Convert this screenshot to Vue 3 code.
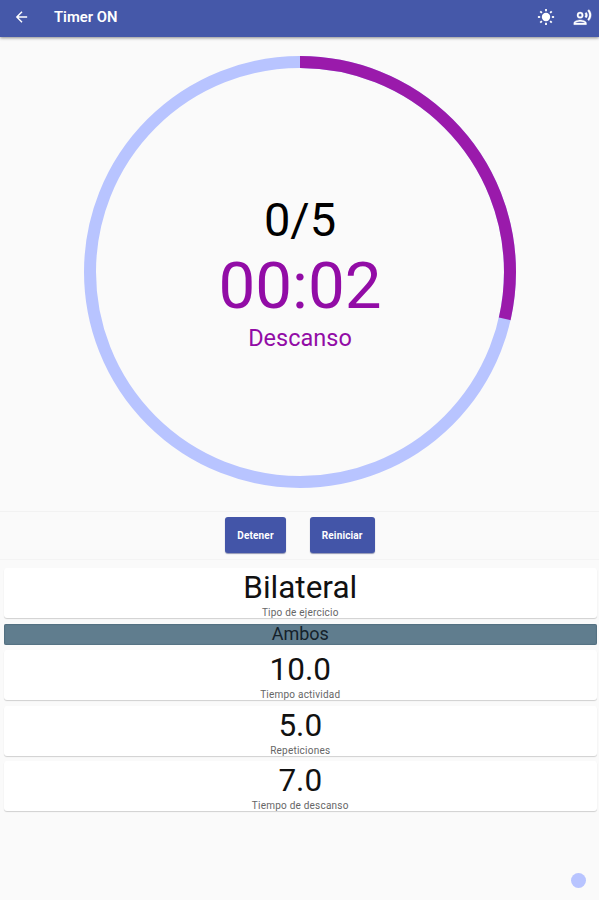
<template>
  <div class="screen">
    <header class="app-bar">
      <svg class="icon back" viewBox="0 0 24 24">
        <path d="M20 11H7.83l5.59-5.59L12 4l-8 8 8 8 1.41-1.41L7.83 13H20v-2z" />
      </svg>
      <h1 class="title">Timer ON</h1>
      <svg class="icon sun" viewBox="0 0 24 24">
        <circle cx="12" cy="12" r="5.6" />
        <g class="rays">
          <path
            v-for="n in 8"
            :key="n"
            d="M12 1.2v3"
            :transform="`rotate(${n * 45} 12 12)`"
          />
        </g>
      </svg>
      <svg class="icon voice" viewBox="0 0 24 24">
        <path
          fill-rule="evenodd"
          d="M9 5a4 4 0 1 0 0 8 4 4 0 0 0 0-8zm0 2a2 2 0 1 1 0 4 2 2 0 0 1 0-4zM9 15c-2.67 0-8 1.34-8 4v2h16v-2c0-2.66-5.33-4-8-4zm-6 4c.2-.7 3.3-2 6-2s5.8 1.3 6 2H3z"
        />
        <path
          d="M16.76 5.36l-1.68 1.69c.84 1.18.84 2.71 0 3.89l1.68 1.69c2.02-2.02 2.02-5.07 0-7.27zM20.07 2l-1.63 1.63c2.77 3.02 2.77 7.56 0 10.74L20.07 16c3.9-3.89 3.91-9.95 0-14z"
        />
      </svg>
    </header>

    <section class="timer">
      <div class="dial">
        <svg class="ring" viewBox="0 0 432 432">
          <circle class="track" cx="216" cy="216" :r="radius" />
          <circle
            class="progress"
            cx="216"
            cy="216"
            :r="radius"
            :stroke-dasharray="dash"
            transform="rotate(-90 216 216)"
          />
        </svg>
        <div class="readout">
          <div class="count">0/5</div>
          <div class="clock">00:02</div>
          <div class="phase">Descanso</div>
        </div>
      </div>
    </section>

    <div class="actions">
      <button type="button" class="btn">Detener</button>
      <button type="button" class="btn">Reiniciar</button>
    </div>

    <main class="cards">
      <div class="card">
        <div class="value">Bilateral</div>
        <div class="label">Tipo de ejercicio</div>
      </div>
      <div class="side">Ambos</div>
      <div v-for="item in settings" :key="item.label" class="card">
        <div class="value">{{ item.value }}</div>
        <div class="label">{{ item.label }}</div>
      </div>
    </main>

    <span class="dot"></span>
  </div>
</template>

<script setup>
const radius = 210;
const length = 2 * Math.PI * radius;
// 2 of the 7 seconds of rest have passed
const dash = `${(length * 2) / 7} ${length}`;

const settings = [
  { value: "10.0", label: "Tiempo actividad" },
  { value: "5.0", label: "Repeticiones" },
  { value: "7.0", label: "Tiempo de descanso" },
];
</script>

<style>
body {
  margin: 0;
}
</style>

<style scoped>
.screen {
  position: relative;
  box-sizing: border-box;
  height: 900px;
  overflow: hidden;
  background: #fafafa;
  color: #111;
  font-family: Roboto, sans-serif;
}
.app-bar {
  position: relative;
  display: flex;
  align-items: center;
  box-sizing: border-box;
  height: 37px;
  padding: 0 7px 3px 13px;
  background: #4558a9;
  box-shadow: 0 1px 3px rgba(0, 0, 0, 0.45);
}
.icon {
  flex: none;
  width: 18px;
  height: 18px;
  fill: #fff;
}
.title {
  flex: 1;
  margin: 0 0 0 24px;
  color: #fff;
  font-size: 14.8px;
  font-weight: 600;
  line-height: 18px;
}
.back {
  width: 17px;
}
.sun {
  margin-right: 18px;
}
.voice {
  width: 19px;
  height: 19px;
  stroke: #fff;
  stroke-width: 0.4;
}
.rays {
  stroke: #fff;
  stroke-width: 2.4;
}
.timer {
  box-sizing: border-box;
  height: 475px;
  padding: 19px 0 0 1px;
  border-bottom: 1px solid #f2f2f2;
}
.dial {
  position: relative;
  width: 432px;
  height: 432px;
  margin: 0 auto;
}
.ring {
  display: block;
  width: 432px;
  height: 432px;
}
.track,
.progress {
  fill: none;
  stroke: #b8c4ff;
  stroke-width: 12;
}
.progress {
  stroke: #9a1aab;
}
.readout {
  position: absolute;
  inset: 0;
  display: flex;
  flex-direction: column;
  align-items: center;
  justify-content: center;
  color: #920ca6;
}
.count {
  color: #000;
  font-size: 47px;
  line-height: 55px;
}
.clock {
  font-size: 65.5px;
  line-height: 78px;
}
.phase {
  font-size: 23.5px;
  line-height: 27px;
}
.actions {
  display: flex;
  justify-content: center;
  gap: 24px;
  box-sizing: border-box;
  height: 48px;
  padding: 5px 0 0 1px;
  border-bottom: 1px solid #f4f4f4;
}
.btn {
  box-sizing: border-box;
  height: 36px;
  padding: 0 12px;
  border: 0;
  border-radius: 3px;
  background: #4355a8;
  box-shadow: 0 1px 1px rgba(40, 50, 110, 0.5);
  color: #fff;
  font: bold 10px Roboto, sans-serif;
  letter-spacing: 0.15px;
}
.cards {
  display: flex;
  flex-direction: column;
  gap: 5.5px;
  padding: 8px 2.5px 0 4px;
  text-align: center;
}
.card {
  height: 50px;
  border-radius: 3px;
  background: #fff;
  box-shadow: 0 1px 1px rgba(0, 0, 0, 0.17);
}
.value {
  font-size: 31.5px;
  line-height: 39px;
}
.label {
  color: #666;
  font-size: 10px;
  letter-spacing: 0.22px;
  line-height: 11px;
}
.side {
  height: 21px;
  border-radius: 2px;
  background: #607d8e;
  box-shadow: inset 0 0 1px 0.5px rgba(50, 80, 95, 0.5);
  color: #14212a;
  font-size: 18px;
  line-height: 20px;
}
.dot {
  position: absolute;
  right: 13px;
  bottom: 12px;
  width: 15px;
  height: 15px;
  border-radius: 50%;
  background: #b8c4ff;
}
</style>
